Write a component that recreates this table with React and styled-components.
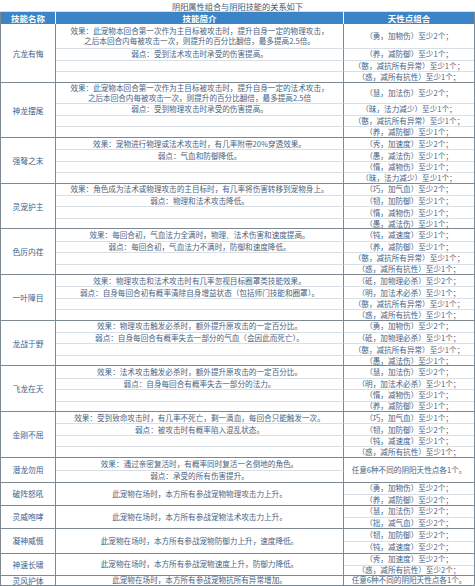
import React from "react";
import styled, { createGlobalStyle } from "styled-components";

const GlobalStyle = createGlobalStyle`
  body {
    margin: 0;
    background: #ffffff;
    font-family: "Noto Sans CJK SC", "Noto Sans", sans-serif;
  }
`;

const COLS = "55px 288px 1fr";
const DARK = "#7d8891";
const LIGHT = "#d9dfe5";

const Sheet = styled.div`
  width: 475px;
  height: 586px;
  overflow: hidden;
  box-sizing: border-box;
`;

const Title = styled.div`
  height: 12px;
  display: flex;
  align-items: center;
  justify-content: center;
  font-size: 8.2px;
  color: #3e5873;
  border-bottom: 1px solid ${LIGHT};
  box-sizing: border-box;
`;

const Header = styled.div`
  display: grid;
  grid-template-columns: ${COLS};
  height: 12px;
  background: #3b85c7;
  border-left: 1px solid ${DARK};
  border-right: 1px solid ${DARK};
`;

const HeadCell = styled.div`
  display: flex;
  align-items: center;
  justify-content: center;
  color: #ffffff;
  font-weight: 700;
  font-size: 8.5px;
  border-right: ${(p) => (p.$last ? "none" : "1px solid #ffffff")};
`;

const Group = styled.div`
  display: grid;
  grid-template-columns: ${COLS};
  grid-template-rows: ${(p) => p.$rows.map((h) => h + "px").join(" ")};
  border-left: 1px solid ${DARK};
  border-right: 1px solid ${DARK};
`;

const Name = styled.div`
  grid-column: 1;
  grid-row: 1 / -1;
  display: flex;
  align-items: center;
  justify-content: center;
  font-size: 7.8px;
  color: #3a6592;
  border-right: 1px solid ${DARK};
  border-bottom: 1px solid ${DARK};
  box-sizing: border-box;
`;

const Cell = styled.div`
  grid-column: ${(p) => p.$col};
  grid-row: ${(p) => `${p.$row} / span ${p.$span}`};
  display: flex;
  align-items: center;
  justify-content: center;
  text-align: center;
  white-space: nowrap;
  font-size: 7.6px;
  line-height: 10px;
  color: #4a6482;
  box-sizing: border-box;
  border-top: ${(p) => (p.$row > 1 ? `1px solid ${LIGHT}` : "none")};
  border-bottom: ${(p) => (p.$last ? `1px solid ${DARK}` : "none")};
  border-right: ${(p) => (p.$col === 2 ? `1px solid ${DARK}` : "none")};
`;

const r4 = [11.4, 11.4, 11.4, 11.5];

const groups = [
  {
    name: "亢龙有悔",
    rows: [24, 11.5, 11.5, 12],
    mid: [
      ["效果：此宠物本回合第一次作为主目标被攻击时，提升自身一定的物理攻击，", "之后本回合内每被攻击一次，则提升的百分比翻倍，最多提高2.5倍。"],
      "弱点：受到法术攻击时承受的伤害提高。", "", "",
    ],
    right: ["（勇，加物伤）至少2个；", "（养，减防御）至少1个；", "（憨，减抗所有异常）至少1个；", "（惑，减所有抗性）至少1个；"],
  },
  {
    name: "神龙摆尾",
    rows: [20, 11.5, 11.5, 12],
    mid: [
      ["效果：此宠物本回合第一次作为主目标被攻击时，提升自身一定的法术攻击，", "之后本回合内每被攻击一次，则提升的百分比翻倍，最多提高2.5倍"],
      "弱点：受到物理攻击时承受的伤害提高。", "", "",
    ],
    right: ["（慧，加法伤）至少2个；", "（昧，法力减少）至少1个；", "（憨，减抗所有异常）至少1个；", "（养，减防御）至少1个；"],
  },
  {
    name: "强弩之末",
    rows: r4,
    mid: ["效果：宠物进行物理或法术攻击时，有几率附带20%穿透效果。", "弱点：气血和防御降低。", "", ""],
    right: ["（秀，加速度）至少2个；", "（愚，减法伤）至少1个；", "（惰，减物伤）至少1个；", "（昧，法力减少）至少1个；"],
  },
  {
    name: "灵宠护主",
    rows: r4,
    mid: ["效果：角色成为法术或物理攻击的主目标时，有几率将伤害转移到宠物身上。", "弱点：物理和法术攻击降低。", "", ""],
    right: ["（巧，加气血）至少2个；", "（韧，加防御）至少1个；", "（惰，减物伤）至少1个；", "（愚，减法伤）至少1个；"],
  },
  {
    name: "色厉内荏",
    rows: r4,
    mid: ["效果：每回合初，气血法力全满时，物理、法术伤害和速度提高。", "弱点：每回合初，气血法力不满时，防御和速度降低。", "", ""],
    right: ["（钝，减速度）至少1个；", "（养，减防御）至少1个；", "（憨，减抗所有异常）至少1个；", "（惑，减所有抗性）至少1个；"],
  },
  {
    name: "一叶障目",
    rows: r4,
    mid: ["效果：物理攻击和法术攻击时有几率忽视目标圈罩类技能效果。", "弱点：自身每回合初有概率清除自身增益状态（包括师门技能和圈罩）。", "", ""],
    right: ["（砥，加物理必杀）至少2个；", "（明，加法术必杀）至少1个；", "（憨，减抗所有异常）至少1个；", "（惑，减所有抗性）至少1个；"],
  },
  {
    name: "龙战于野",
    rows: r4,
    mid: ["效果：物理攻击触发必杀时，额外提升原攻击的一定百分比。", "弱点：自身每回合有概率失去一部分的气血（会因此而死亡）。", "", ""],
    right: ["（勇，加物伤）至少2个；", "（砥，加物理必杀）至少1个；", "（憨，减抗所有异常）至少1个；", "（愚，减法伤）至少1个；"],
  },
  {
    name: "飞龙在天",
    rows: r4,
    mid: ["效果：法术攻击触发必杀时，额外提升原攻击的一定百分比。", "弱点：自身每回合有概率失去一部分的法力。", "", ""],
    right: ["（慧，加法伤）至少2个；", "（明，加法术必杀）至少1个；", "（惰，减物伤）至少1个；", "（养，减防御）至少1个；"],
  },
  {
    name: "金刚不屈",
    rows: r4,
    mid: ["效果：受到致命攻击时，有几率不死亡，剩一滴血，每回合只能触发一次。", "弱点：被攻击时有概率陷入混乱状态。", "", ""],
    right: ["（巧，加气血）至少1个；", "（韧，加防御）至少2个；", "（钝，减速度）至少1个；", "（惑，减所有抗性）至少1个；"],
  },
  {
    name: "潜龙勿用",
    rows: [12.5, 12.5],
    mid: ["效果：通过亲密复活时，有概率同时复活一名倒地的角色。", "弱点：承受的所有伤害提升。"],
    right: ["任意6种不同的阴阳天性点各1个。"],
  },
  {
    name: "破阵怒吼",
    rows: [11.5, 11.5],
    mid: ["此宠物在场时，本方所有参战宠物物理攻击力上升。"],
    right: ["（勇，加物伤）至少2个；", "（养，减防御）至少2个；"],
  },
  {
    name: "灵威咆哮",
    rows: [11.5, 11.5],
    mid: ["此宠物在场时，本方所有参战宠物法术攻击力上升。"],
    right: ["（慧，加法伤）至少2个；", "（拙，减气血）至少2个；"],
  },
  {
    name: "凝神威慑",
    rows: [12.5, 12.5],
    mid: ["此宠物在场时，本方所有参战宠物防御力上升，速度降低。"],
    right: ["（韧，加防御）至少2个；", "（钝，减速度）至少2个；"],
  },
  {
    name: "神速长啸",
    rows: [11, 11],
    mid: ["此宠物在场时，本方所有参战宠物速度上升，防御力降低。"],
    right: ["（秀，加速度）至少2个；", "（惑，减所有抗性）至少2个；"],
  },
  {
    name: "灵风护体",
    rows: [10],
    mid: ["此宠物在场时，本方所有参战宠物抗所有异常增加。"],
    right: ["任意6种不同的阴阳天性点各1个。"],
  },
];

function cells(items, col, total) {
  const span = Math.floor(total / items.length);
  return items.map((text, i) => {
    const row = i * span + 1;
    return (
      <Cell key={col + "-" + i} $col={col} $row={row} $span={span} $last={row + span - 1 === total}>
        <div>
          {Array.isArray(text)
            ? text.map((line, j) => <div key={j}>{line}</div>)
            : text}
        </div>
      </Cell>
    );
  });
}

export default function App() {
  return (
    <Sheet>
      <GlobalStyle />
      <Title>阴阳属性组合与阴阳技能的关系如下</Title>
      <Header>
        <HeadCell>技能名称</HeadCell>
        <HeadCell>技能简介</HeadCell>
        <HeadCell $last>天性点组合</HeadCell>
      </Header>
      {groups.map((g) => (
        <Group key={g.name} $rows={g.rows}>
          <Name>{g.name}</Name>
          {cells(g.mid, 2, g.rows.length)}
          {cells(g.right, 3, g.rows.length)}
        </Group>
      ))}
    </Sheet>
  );
}
